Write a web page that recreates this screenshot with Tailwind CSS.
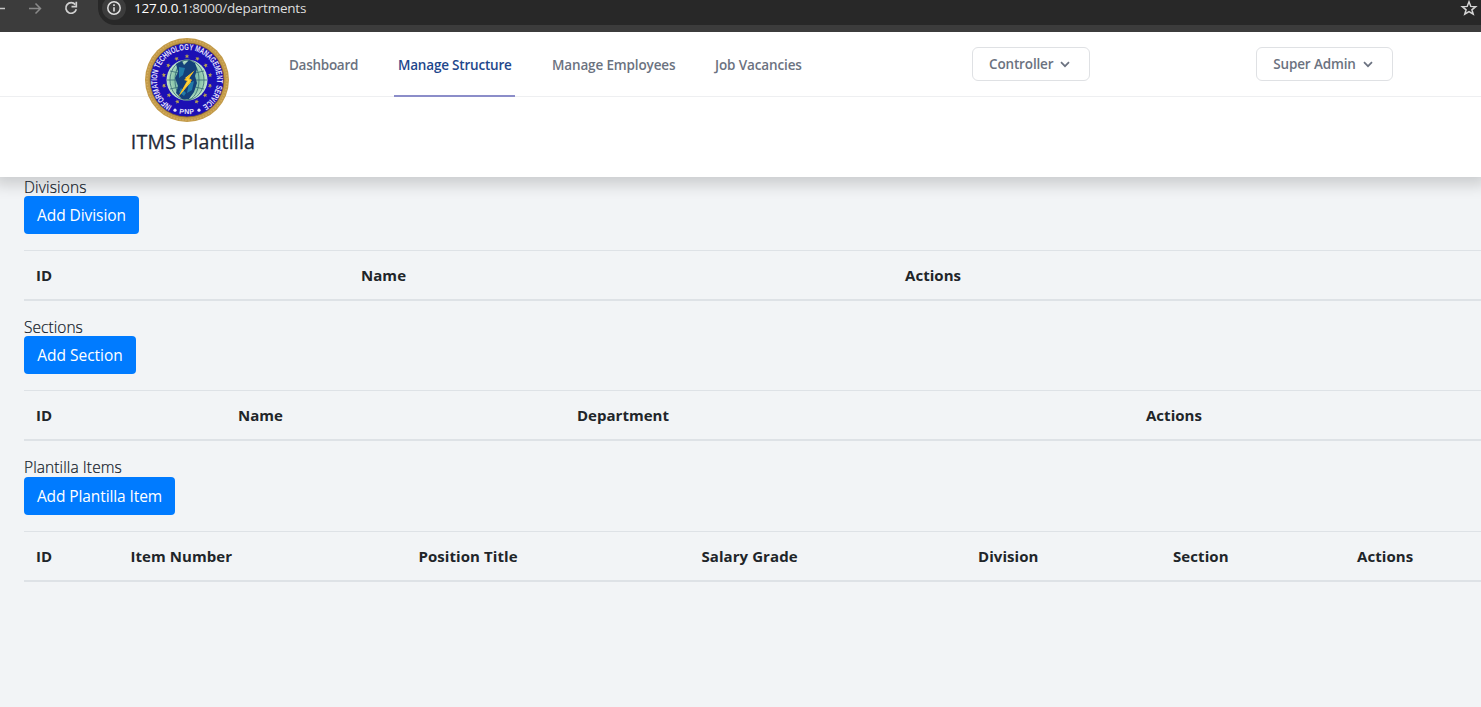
<!DOCTYPE html>
<html lang="en">
<head>
<meta charset="utf-8">
<title>ITMS Plantilla</title>
<script src="https://cdn.jsdelivr.net/npm/@tailwindcss/browser@4"></script>
</head>
<body class="w-[1481px] h-[707px] overflow-hidden bg-[#f2f4f6] font-['Open_Sans','Noto_Sans',sans-serif] text-[#212529]">
<div class="relative z-10 h-8 flex items-start bg-[#3c3c3c] text-[#dedede]">
  <svg class="w-[98px] h-8 shrink-0" viewBox="0 0 98 32" fill="none" stroke-width="1.5">
    <path d="M-6 8.5H5" stroke="#c7c7c7"/>
    <path d="M29 8.5H40M35.500 3.500L40.500 8.500L35.500 13.500" stroke="#8a8a8a"/>
    <path d="M75.300 4.600A5.300 5.300 0 1 0 76.300 9.300" stroke="#d0d0d0" stroke-width="1.700"/>
    <path d="M76.300 1.800V6.600H71.500" stroke="#d0d0d0" stroke-width="1.700"/>
  </svg>
  <div class="h-[25px] flex-1 bg-[#282828] rounded-bl-[17px] flex items-start">
    <svg class="w-8 h-[25px] shrink-0" viewBox="0 0 32 25" fill="none">
      <circle cx="16" cy="8" r="12" fill="#3c3c3c"/>
      <circle cx="16" cy="8" r="6.200" stroke="#e0e0e0" stroke-width="1.500"/>
      <path d="M16 7.200V11.500M16 4.300V5.900" stroke="#e0e0e0" stroke-width="1.600"/>
    </svg>
    <div class="ml-1 mt-[-2px] text-[13.5px] leading-5 flex-1"><span class="tracking-[-0.22px] text-white">127.0.0.1</span><span class="tracking-[-0.22px]">:8000/departments</span></div>
    <svg class="w-6 h-[25px] shrink-0" viewBox="0 0 24 25" fill="none"><path d="M12 1.800L13.800 6.400L18.700 6.700L14.900 9.800L16.200 14.200L12 11.600L7.800 14.200L9.100 9.800L5.300 6.700L10.200 6.400Z" stroke="#d6d6d6" stroke-width="1.500"/></svg>
  </div>
</div>
<header class="relative h-[145px] bg-white shadow-[0_2px_14px_6px_rgba(0,0,0,0.16)]">
  <nav class="h-[65px] flex items-start border-b border-[#eeeff1] text-[13.5px] leading-5 font-semibold text-[#6b7280]">
    <div class="ml-[131px] w-[124px] shrink-0 pt-[6px] flex flex-col items-center">
      <svg class="w-[84px] h-[84px] ml-[-12px] shrink-0" viewBox="0 0 84 84">
        <defs>
          <path id="ring" d="M27 68A30 30 0 1 1 57 68"/>
          <path id="foot" d="M25 71.800A34.300 34.300 0 0 0 59 71.800"/>
          <radialGradient id="globe"><stop offset="0" stop-color="#5b9fb0"/><stop offset="0.700" stop-color="#8fc9ad"/><stop offset="1" stop-color="#c3e5cf"/></radialGradient>
        </defs>
        <circle cx="42" cy="42" r="42" fill="#c29a49"/>
        <circle cx="42" cy="42" r="40" fill="none" stroke="#d4ab5c" stroke-width="1.500" stroke-dasharray="1.500 1.500"/>
        <circle cx="42" cy="42" r="37" fill="#1c0fb4" stroke="#8c6a2a" stroke-width="0.800"/>
        <g class="font-['Liberation_Sans',sans-serif] font-bold" fill="#e4e1fb">
          <text font-size="8.500"><textPath href="#ring" textLength="156" lengthAdjust="spacingAndGlyphs">INFORMATION TECHNOLOGY MANAGEMENT SERVICE</textPath></text>
          <text font-size="7" text-anchor="middle" letter-spacing="0.500"><textPath href="#foot" startOffset="50%">PNP</textPath></text>
          <circle cx="30" cy="72.200" r="1.600"/><circle cx="54" cy="72.200" r="1.600"/>
        </g>
        <g fill="#b7a252">
          <path id="star" d="M42 16L42.700 17.500L44.300 17.600L43.100 18.600L43.500 20.200L42 19.300L40.500 20.200L40.900 18.600L39.700 17.600L41.300 17.500Z"/>
          <use href="#star" transform="rotate(26 42 42)"/><use href="#star" transform="rotate(52 42 42)"/><use href="#star" transform="rotate(78 42 42)"/><use href="#star" transform="rotate(104 42 42)"/><use href="#star" transform="rotate(130 42 42)"/><use href="#star" transform="rotate(156 42 42)"/><use href="#star" transform="rotate(204 42 42)"/><use href="#star" transform="rotate(230 42 42)"/><use href="#star" transform="rotate(256 42 42)"/><use href="#star" transform="rotate(282 42 42)"/><use href="#star" transform="rotate(308 42 42)"/><use href="#star" transform="rotate(334 42 42)"/>
        </g>
        <circle cx="42" cy="42" r="20.500" fill="url(#globe)"/>
        <g fill="none" stroke="#356b74" stroke-width="0.800"><ellipse cx="42" cy="42" rx="17" ry="20"/><ellipse cx="42" cy="42" rx="12" ry="20"/><path d="M22 42H62M25 33Q42 38 59 33M25 51Q42 46 59 51"/></g>
        <path d="M31 26L37 23L39 27L44 22L50 25L52 31L50 38L52 45L49 54L44 61L37 61L31 55L33 48L30 40L33 34Z" fill="#14407a"/>
        <path d="M34 29L40 30L38 37L34 40ZM44 45L49 43L47 52L42 55ZM36 50L41 55L39 58L34 54Z" fill="#227aa8"/>
        <path d="M49 33L40 40L43 42L34 58L46 44L43 42Z" fill="#ffde3d"/>
        <path d="M50 32L39 42L42 43L33 59L47 42L44 40Z" fill="#f8b822"/>
        <path d="M46 37L41 42L43.500 42.500L37 53L45 43L43 41Z" fill="#ffe24a"/>
      </svg>
      <div class="mt-[8px] text-[19.5px] leading-6 font-medium text-[#1f2937] tracking-[0.2px] whitespace-nowrap [-webkit-text-stroke:0.3px_#1f2937]">ITMS Plantilla</div>
    </div>
    <div class="ml-[30px] w-[77px] h-[65px] shrink-0 px-1 pt-[23px] whitespace-nowrap tracking-[-0.28px]">Dashboard</div>
    <div class="ml-8 w-[121px] h-[65px] shrink-0 px-1 pt-[23px] whitespace-nowrap tracking-[-0.2px] text-[#1e478c] border-b-2 border-[#8b8dc9]">Manage Structure</div>
    <div class="ml-[33px] w-[131px] shrink-0 px-1 pt-[23px] whitespace-nowrap tracking-[-0.14px]">Manage Employees</div>
    <div class="ml-8 w-[96px] shrink-0 px-1 pt-[23px] whitespace-nowrap tracking-[-0.12px]">Job Vacancies</div>
    <button class="ml-[165px] mt-[15px] w-[118px] h-[34px] shrink-0 border border-[#dfe1e4] rounded-md pl-4 flex items-center whitespace-nowrap tracking-[-0.15px]"><span class="w-[64px]">Controller</span><svg class="ml-[7px] w-[10px] h-[7px]" viewBox="0 0 10 7" fill="none" stroke="#6b7280" stroke-width="1.700"><path d="M1 1.200L5 5.200L9 1.200"/></svg></button>
    <button class="ml-[166px] mt-[15px] w-[137px] h-[34px] shrink-0 border border-[#dfe1e4] rounded-md pl-4 flex items-center whitespace-nowrap tracking-[-0.15px]"><span class="w-[83px]">Super Admin</span><svg class="ml-[7px] w-[10px] h-[7px]" viewBox="0 0 10 7" fill="none" stroke="#6b7280" stroke-width="1.700"><path d="M1 1.200L5 5.200L9 1.200"/></svg></button>
  </nav>
</header>
<main class="relative pl-6 text-[15.5px]">
  <section class="h-[140px]">
    <h2 class="h-[19px] leading-5 font-light tracking-[0.15px] text-[#111827] [-webkit-text-stroke:0.2px_#111827]">Divisions</h2>
    <button class="block w-[115px] h-[38px] pt-[2px] rounded bg-[#007bff] text-white tracking-[-0.07px] whitespace-nowrap">Add Division</button>
    <div class="mt-4 h-[51px] flex items-center border-t border-b-2 border-[#dee2e6] pl-3 font-bold text-[15px] tracking-[0.05px] whitespace-nowrap"><span class="w-[325px]">ID</span><span class="w-[544px]">Name</span><span>Actions</span></div>
  </section>
  <section class="h-[140px]">
    <h2 class="h-[19px] leading-5 font-light tracking-[0.05px] text-[#111827] [-webkit-text-stroke:0.2px_#111827]">Sections</h2>
    <button class="block w-[112px] h-[38px] pt-[2px] rounded bg-[#007bff] text-white tracking-[-0.02px] whitespace-nowrap">Add Section</button>
    <div class="mt-4 h-[51px] flex items-center border-t border-b-2 border-[#dee2e6] pl-3 font-bold text-[15px] tracking-[0.02px] whitespace-nowrap"><span class="w-[202px]">ID</span><span class="w-[339px]">Name</span><span class="w-[569px]">Department</span><span>Actions</span></div>
  </section>
  <section>
    <h2 class="h-5 leading-5 font-light tracking-[0.1px] text-[#111827] [-webkit-text-stroke:0.2px_#111827]">Plantilla Items</h2>
    <button class="block w-[151px] h-[38px] pt-[2px] rounded bg-[#007bff] text-white tracking-[-0.1px] whitespace-nowrap">Add Plantilla Item</button>
    <div class="mt-4 h-[51px] flex items-center border-t border-b-2 border-[#dee2e6] pl-3 font-bold text-[15px] tracking-[0.07px] whitespace-nowrap"><span class="w-[94.500px]">ID</span><span class="w-[288px]">Item Number</span><span class="w-[283px]">Position Title</span><span class="w-[276.500px]">Salary Grade</span><span class="w-[195px]">Division</span><span class="w-[184px]">Section</span><span>Actions</span></div>
  </section>
</main>
</body>
</html>
